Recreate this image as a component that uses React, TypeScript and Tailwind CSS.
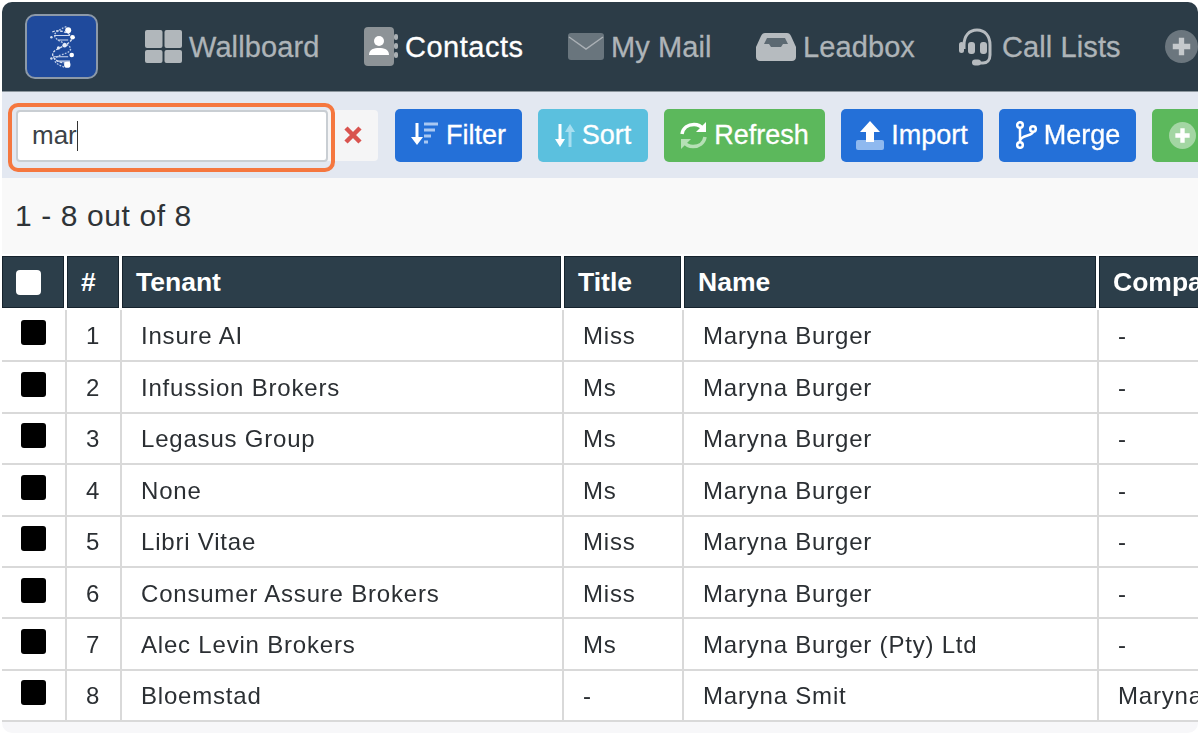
import React from "react";

const F = { fontFamily: '"Liberation Sans", Arial, sans-serif' };

function Logo() {
  return (
    <div className="w-[73px] h-[65px] shrink-0 rounded-[10px] border-[2px] border-[#8c99a8] bg-[#1f4a9c] flex items-center justify-center">
      <svg width="30" height="50" viewBox="0 0 34 50" fill="none">
        <path d="M22 2 C6 8 4 14 18 20 C30 25 30 30 16 34 C4 38 8 44 20 48" stroke="#b9c9e6" strokeWidth="1.5" strokeDasharray="2 1.5" />
        <path d="M6 8 C14 4 30 10 28 16 C26 22 12 26 8 30 C2 36 14 46 26 42" stroke="#d5def0" strokeWidth="1.5" strokeDasharray="3 1.5" />
        <circle cx="24" cy="6" r="3.4" fill="#fff" />
        <circle cx="29" cy="14" r="2.6" fill="#fff" />
        <circle cx="20" cy="23" r="2.6" fill="#e6ecf8" />
        <circle cx="13" cy="26" r="1.8" fill="#e6ecf8" />
        <circle cx="28" cy="34" r="2.6" fill="#fff" />
        <circle cx="23" cy="45" r="3.6" fill="#fff" />
        <circle cx="5" cy="14" r="1.4" fill="#d5def0" />
        <circle cx="5" cy="38" r="1.4" fill="#d5def0" />
        <path d="M8 12 H26 M12 17 H24 M7 36 H24 M11 41 H26" stroke="#cfd9ee" strokeWidth="1.2" />
      </svg>
    </div>
  );
}

const WallIcon = () => (
  <svg width="37" height="33" viewBox="0 0 37 33" fill="#b1b7bb">
    <rect x="0" y="0" width="17.5" height="18" rx="2" />
    <rect x="19.5" y="0" width="17.5" height="18" rx="2" />
    <rect x="0" y="20" width="17.5" height="13" rx="2" />
    <rect x="19.5" y="20" width="17.5" height="13" rx="2" />
  </svg>
);
const ContactIcon = () => (
  <svg width="34" height="39" viewBox="0 0 34 39">
    <rect x="0" y="0" width="30" height="39" rx="4" fill="#8d9397" />
    <rect x="30" y="7" width="4" height="6" rx="2" fill="#a9afb3" />
    <rect x="30" y="16" width="4" height="6" rx="2" fill="#a9afb3" />
    <rect x="30" y="25" width="4" height="6" rx="2" fill="#a9afb3" />
    <circle cx="15" cy="14" r="5" fill="#fff" />
    <path d="M5 28 C5 22 10 21 15 21 C20 21 25 22 25 28 Z" fill="#fff" />
  </svg>
);
const MailIcon = () => (
  <svg width="36" height="27" viewBox="0 0 36 27">
    <rect x="0" y="0" width="36" height="27" rx="3" fill="#69757d" />
    <path d="M1 4 L18 16 L35 4" fill="none" stroke="#aab0b5" strokeWidth="1.5" />
  </svg>
);
const InboxIcon = () => (
  <svg width="40" height="28" viewBox="0 0 40 28">
    <path d="M9 0 H31 C33 0 34 1 35 3 L40 14 V24 C40 26.500 38 28 36 28 H4 C2 28 0 26.500 0 24 V14 L5 3 C6 1 7 0 9 0 Z" fill="#b6bbbf" />
    <path d="M11 5 H29 L32 11 H27 L25 14 H15 L13 11 H8 Z" fill="#5c6972" />
  </svg>
);
const HeadsetIcon = () => (
  <svg width="36" height="38" viewBox="0 0 36 38" fill="none">
    <path d="M5 21 V17 C5 8 10 2 18 2 C26 2 31 8 31 17 V27 C31 32 28 35 24 35 H16" stroke="#b6bbbf" strokeWidth="3" />
    <rect x="13" y="31.500" width="9" height="6" rx="3" fill="#b6bbbf" />
    <rect x="0" y="14" width="5" height="11" rx="2.500" fill="#b6bbbf" />
    <rect x="9" y="14" width="7" height="12" rx="3" fill="#b6bbbf" />
    <rect x="21" y="14" width="7" height="12" rx="3" fill="#b6bbbf" />
  </svg>
);
const PlusCircle = ({ size, bg, fg }: { size: number; bg: string; fg: string }) => (
  <svg width={size} height={size} viewBox="0 0 34 34">
    <circle cx="17" cy="17" r="17" fill={bg} />
    <path d="M17 8 V26 M8 17 H26" stroke={fg} strokeWidth="5.500" />
  </svg>
);
const FilterIcon = () => (
  <svg width="28" height="26" viewBox="0 0 28 26" fill="none">
    <path d="M6 1 V20" stroke="#fff" strokeWidth="3" />
    <path d="M0 15 H12 L6 23 Z" fill="#fff" />
    <path d="M13 2 H27" stroke="#a9c8f2" strokeWidth="3" />
    <path d="M13 8 H24" stroke="#a9c8f2" strokeWidth="3" />
    <path d="M13 14 H20" stroke="#a9c8f2" strokeWidth="3" />
    <path d="M13 20 H17" stroke="#a9c8f2" strokeWidth="3" />
  </svg>
);
const SortIcon = () => (
  <svg width="20" height="25" viewBox="0 0 20 25" fill="none">
    <path d="M5 1 V20" stroke="#fff" strokeWidth="3" />
    <path d="M0 16 H10 L5 24 Z" fill="#fff" />
    <path d="M15 5 V24" stroke="#a8dff0" strokeWidth="3" />
    <path d="M10 9 H20 L15 1 Z" fill="#a8dff0" />
  </svg>
);
const RefreshIcon = () => (
  <svg width="27" height="27" viewBox="0 0 27 27" fill="none">
    <path d="M2 12 C3 6 8 2.500 14 2.500 C18 2.500 21 4 23 7" stroke="#fff" strokeWidth="3.500" />
    <path d="M26 0 V10 H16 Z" fill="#fff" />
    <path d="M25 15 C24 21 19 24.500 13 24.500 C9 24.500 6 23 4 20" stroke="#b5e0b5" strokeWidth="3.500" />
    <path d="M1 27 V17 H11 Z" fill="#b5e0b5" />
  </svg>
);
const ImportIcon = () => (
  <svg width="28" height="29" viewBox="0 0 28 29">
    <rect x="0" y="19" width="28" height="10" rx="2" fill="#8fb9ef" />
    <path d="M14 0 L24 11 H18 V21 H10 V11 H4 Z" fill="#fff" />
  </svg>
);
const MergeIcon = () => (
  <svg width="22" height="28" viewBox="0 0 22 28" fill="none" stroke="#fff" strokeWidth="2.500">
    <circle cx="5" cy="4" r="2.800" />
    <circle cx="5" cy="24" r="2.800" />
    <circle cx="18" cy="8" r="2.800" />
    <path d="M5 7 V21 M18 11 C18 15 5 14 5 20" />
  </svg>
);

const nav = [
  { icon: <WallIcon />, label: "Wallboard", w: "w-[219px]", t: "text-[#aeb4b8] tracking-[0.1px]" },
  { icon: <ContactIcon />, label: "Contacts", w: "w-[204px]", t: "text-white tracking-[0.5px]" },
  { icon: <MailIcon />, label: "My Mail", w: "w-[188px]", t: "text-[#aeb4b8] tracking-[0.1px]" },
  { icon: <InboxIcon />, label: "Leadbox", w: "w-[203px]", t: "text-[#aeb4b8] tracking-[0.1px]" },
  { icon: <HeadsetIcon />, label: "Call Lists", w: "w-[206px]", t: "text-[#aeb4b8] tracking-[0.1px]" },
];

const buttons = [
  { icon: <FilterIcon />, label: "Filter", w: "w-[127px]", bg: "bg-[#2470d8]" },
  { icon: <SortIcon />, label: "Sort", w: "w-[110px]", bg: "bg-[#5bc0de]" },
  { icon: <RefreshIcon />, label: "Refresh", w: "w-[161px]", bg: "bg-[#5cb85c]" },
  { icon: <ImportIcon />, label: "Import", w: "w-[142px]", bg: "bg-[#2470d8]" },
  { icon: <MergeIcon />, label: "Merge", w: "w-[137px]", bg: "bg-[#2470d8]" },
];

const rows = [
  ["1", "Insure AI", "Miss", "Maryna Burger", "-"],
  ["2", "Infussion Brokers", "Ms", "Maryna Burger", "-"],
  ["3", "Legasus Group", "Ms", "Maryna Burger", "-"],
  ["4", "None", "Ms", "Maryna Burger", "-"],
  ["5", "Libri Vitae", "Miss", "Maryna Burger", "-"],
  ["6", "Consumer Assure Brokers", "Miss", "Maryna Burger", "-"],
  ["7", "Alec Levin Brokers", "Ms", "Maryna Burger (Pty) Ltd", "-"],
  ["8", "Bloemstad", "-", "Maryna Smit", "Maryna"],
];

const Th = ({ children, w, first }: { children?: React.ReactNode; w: string; first?: boolean }) => (
  <th className={`${w} p-0 pr-[2px] pt-[2px] pb-[2px] text-left align-top font-bold ${first ? "" : "pl-[1px]"}`}>
    <div className="h-[52px] bg-[#2c3e4a] border border-[#16232d] flex items-center pl-[13px] pt-[1px] text-white text-[26.500px] whitespace-nowrap overflow-hidden">
      {children}
    </div>
  </th>
);

export default function App() {
  return (
    <div className="w-[1200px] h-[735px] bg-white p-[2px] overflow-hidden" style={F}>
      <div className="w-[1196px] h-[731px] rounded-[10px] overflow-hidden bg-[#f7f7f9] flex flex-col blur-[0.5px]">
        <div className="h-[90px] shrink-0 bg-[#2c3c47] border-b border-[#8d979e] flex items-center pl-[23px]">
          <Logo />
          <div className="flex items-center ml-[47px]">
            {nav.map((n) => (
              <div key={n.label} className={`${n.w} shrink-0 flex items-center gap-[7px] text-[29px] [-webkit-text-stroke:0.3px] ${n.t}`}>
                {n.icon}
                <span className="mt-[2px]">{n.label}</span>
              </div>
            ))}
            <PlusCircle size={33} bg="#6b767e" fg="#c5c9cc" />
          </div>
        </div>

        <div className="h-[86px] shrink-0 bg-[#e3e8f1] flex items-center pl-[6px]">
          <div className="relative z-10 w-[327px] h-[69px] mt-[4px] shrink-0 rounded-[10px] border-[4px] border-[#f5773f] pl-[4px] pr-[3px] pt-[3px] pb-[6px]">
            <div className="w-full h-full bg-white border-2 border-[#c9ced3] rounded-[4px] flex items-center pl-[14px] text-[26px] text-[#3c4247]">
              mar<span className="inline-block w-[1.500px] h-[30px] bg-[#333]" />
            </div>
          </div>
          <div className="w-[51px] h-[51px] shrink-0 -ml-[8px] bg-[#f5f5f6] rounded-r-[4px] flex items-center justify-center">
            <svg width="20" height="20" viewBox="0 0 20 20"><path d="M3 3 L17 17 M17 3 L3 17" stroke="#d9534f" strokeWidth="4.500" /></svg>
          </div>
          <div className="flex gap-[16px] ml-[17px]">
            {buttons.map((b) => (
              <div key={b.label} className={`${b.w} h-[53px] shrink-0 ${b.bg} rounded-[5px] flex items-center justify-center gap-[7px] text-white text-[27px] [-webkit-text-stroke:0.3px]`}>
                {b.icon}
                <span>{b.label}</span>
              </div>
            ))}
            <div className="w-[60px] h-[53px] shrink-0 bg-[#5cb85c] rounded-[5px] flex items-center pl-[17px]">
              <PlusCircle size={27} bg="#a3d6a3" fg="#fff" />
            </div>
          </div>
        </div>

        <div className="h-[76px] shrink-0 bg-[#f9f9f9] flex items-center pl-[13px] text-[30px] tracking-[0.6px] text-[#2f3438] pb-[1px]">
          1 - 8 out of 8
        </div>

        <table className="table-fixed border-collapse w-[1300px] shrink-0 bg-white">
          <thead>
            <tr>
              <Th first w="w-[64px]"><span className="block w-[25px] h-[25px] rounded-[4px] bg-white" /></Th>
              <Th w="w-[55px]">#</Th>
              <Th w="w-[442px]">Tenant</Th>
              <Th w="w-[120px]">Title</Th>
              <Th w="w-[415px]">Name</Th>
              <Th w="w-[204px]">Company</Th>
            </tr>
          </thead>
          <tbody className="text-[24px] tracking-[0.8px] text-[#2b2f33]">
            {rows.map((r) => (
              <tr key={r[0]} className="h-[51.400px] border-b-2 border-[#d9d9d9]">
                <td className="border-r-2 border-[#d9d9d9] p-0 pl-[19px] align-middle">
                  <span className="block w-[25px] h-[25px] rounded-[3px] bg-black -mt-[5px]" />
                </td>
                <td className="border-r-2 border-[#d9d9d9] p-0 pl-[19px] pt-[2px]">{r[0]}</td>
                <td className="border-r-2 border-[#d9d9d9] p-0 pl-[19px] pt-[2px] whitespace-nowrap">{r[1]}</td>
                <td className="border-r-2 border-[#d9d9d9] p-0 pl-[19px] pt-[2px]">{r[2]}</td>
                <td className="border-r-2 border-[#d9d9d9] p-0 pl-[19px] pt-[2px] whitespace-nowrap">{r[3]}</td>
                <td className="p-0 pl-[19px] pt-[2px] whitespace-nowrap">{r[4]}</td>
              </tr>
            ))}
          </tbody>
        </table>
      </div>
    </div>
  );
}
